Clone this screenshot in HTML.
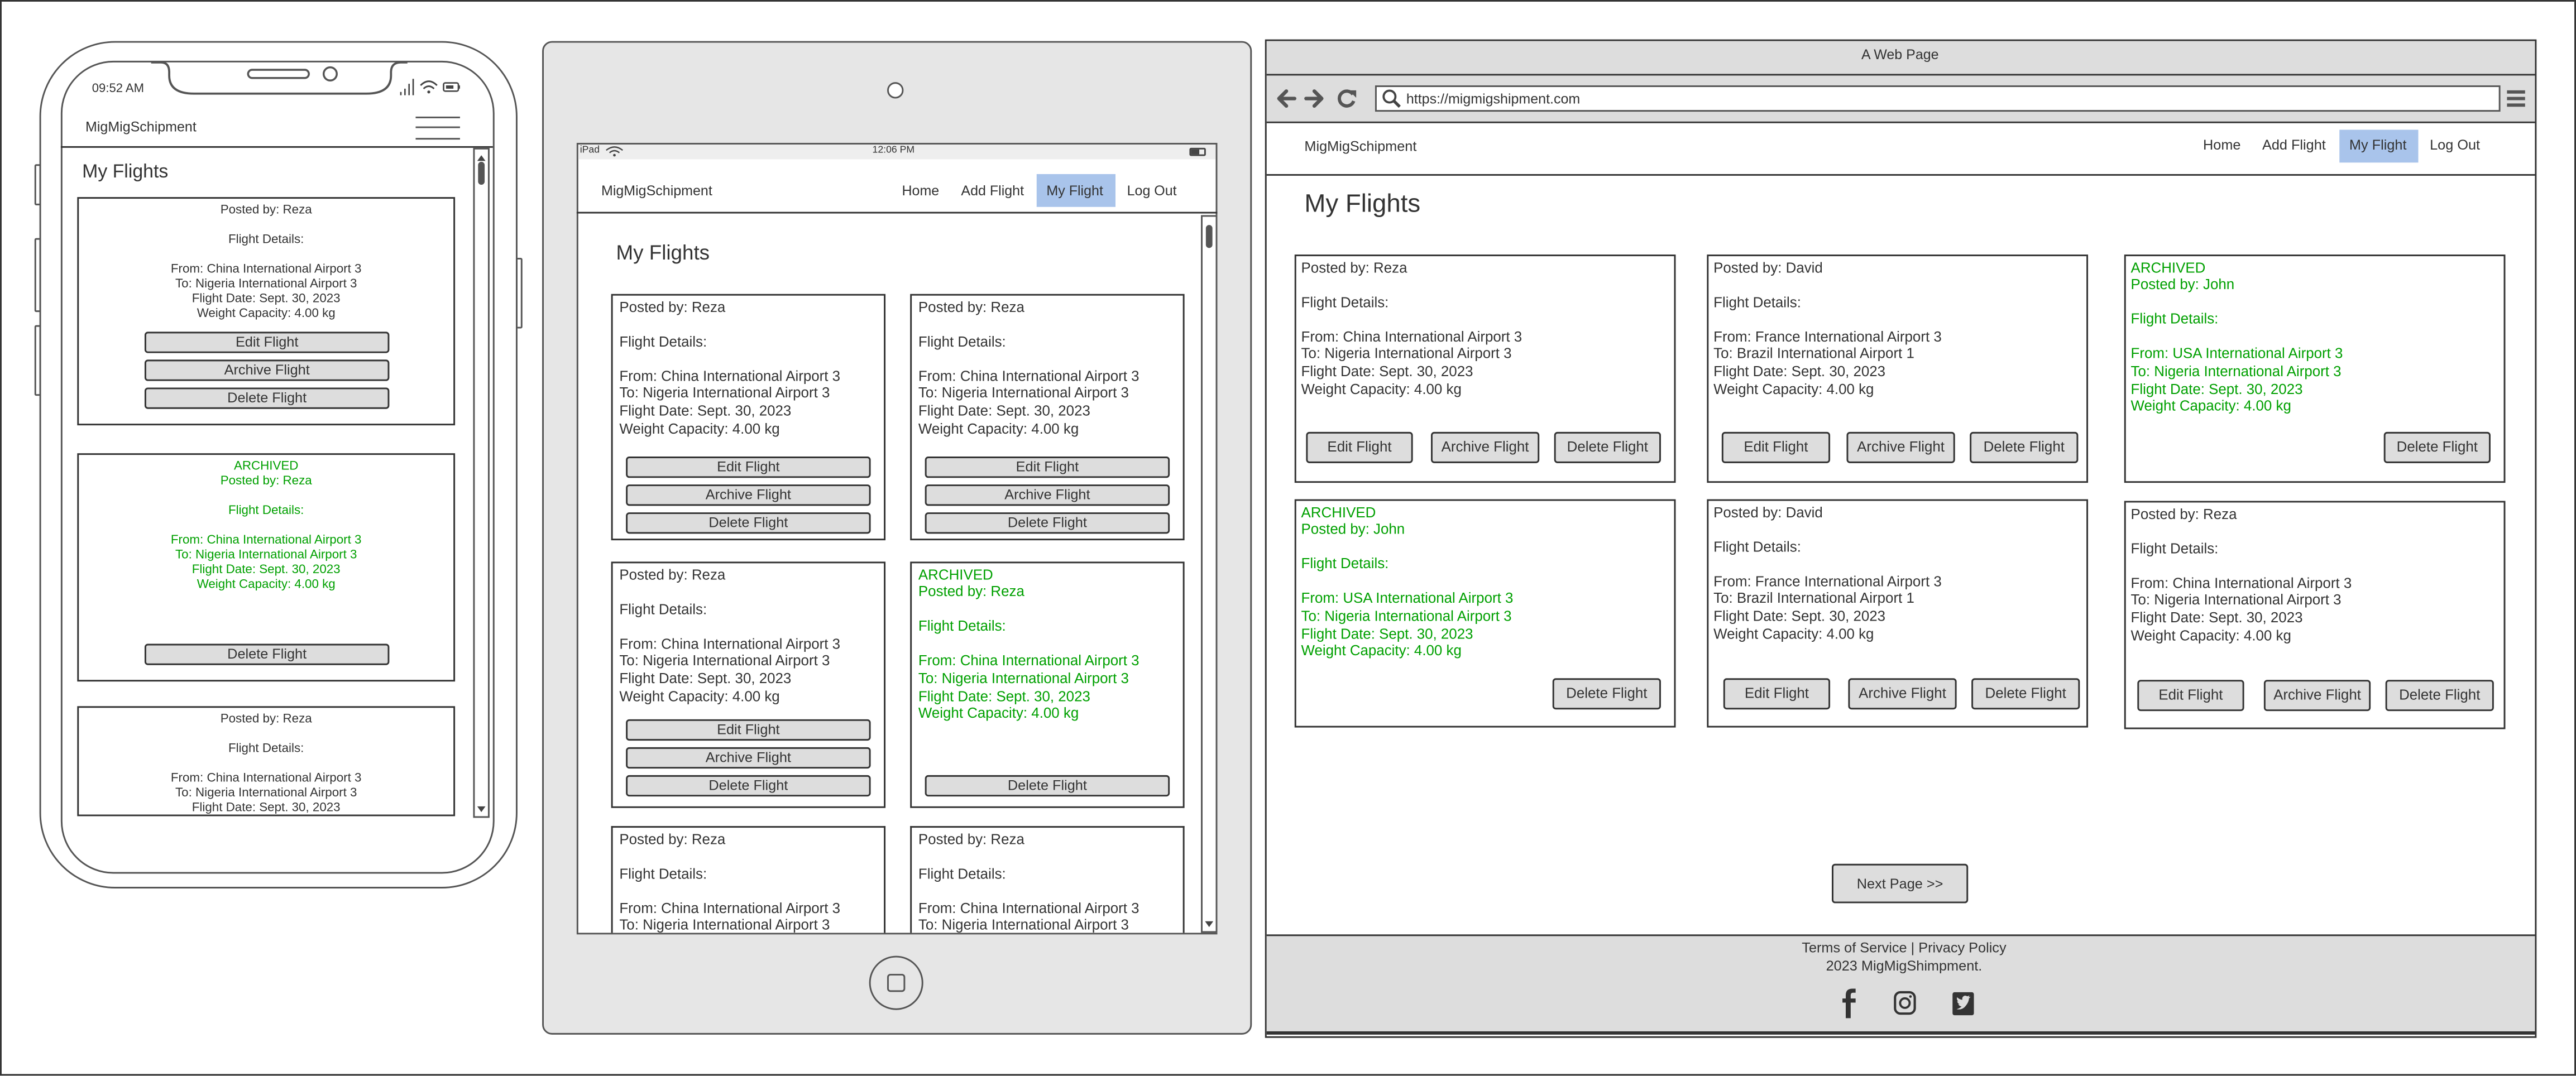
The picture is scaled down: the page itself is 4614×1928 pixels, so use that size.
<!DOCTYPE html>
<html><head><meta charset="utf-8">
<style>
html,body{margin:0;padding:0;width:4614px;height:1928px;overflow:hidden;background:#fff}
#s{position:absolute;left:0;top:0;width:1568px;height:655.2px;transform:scale(2.94260);transform-origin:0 0;font-family:"Liberation Sans",sans-serif;color:#333}
.a{position:absolute;box-sizing:border-box}
.t{position:absolute;white-space:nowrap;line-height:10px}
.card{position:absolute;box-sizing:border-box;border:1px solid #333;background:#fff;white-space:nowrap;overflow:hidden}
.b{position:absolute;box-sizing:border-box;border:1px solid #333;border-radius:2px;background:#ddd;text-align:center;white-space:nowrap}
.g{color:#00a000}
.bc{font-size:8.8px;line-height:10.6px;padding:1.5px 0 0 3px}
.tc{font-size:8.8px;line-height:10.6px;padding:1.5px 0 0 4px}
.pc{font-size:7.6px;line-height:9px;padding:2px 0 0 0;text-align:center}
.bb{font-size:8.8px;height:19px;line-height:17px}
.tb{font-size:8.6px;height:13px;line-height:11px}
.pb{font-size:8.6px;height:13px;line-height:11px}
</style></head><body><div id="s">
<div class="a" style="left:0;top:0;width:1568px;height:655px;border:1px solid #333"></div>

<!-- PHONE -->
<div class="a" style="left:21px;top:100px;width:4px;height:25px;border:1px solid #555;border-radius:1px"></div>
<div class="a" style="left:21px;top:145px;width:4px;height:45px;border:1px solid #555;border-radius:1px"></div>
<div class="a" style="left:21px;top:198px;width:4px;height:43px;border:1px solid #555;border-radius:1px"></div>
<div class="a" style="left:314px;top:157px;width:4px;height:43px;border:1px solid #555;border-radius:1px"></div>
<div class="a" style="left:24px;top:25px;width:291px;height:516px;border:1.5px solid #555;border-radius:46px;background:#fff"></div>
<div class="a" style="left:37px;top:37px;width:264px;height:495px;border:1.3px solid #555;border-radius:32px;background:#fff"></div>
<svg class="a" style="left:90px;top:37px" width="160" height="30" viewBox="0 0 160 30"><path d="M2 1 H8 Q13 1 13 7 V9 Q13 20 28 20 H133 Q148 20 148 9 V7 Q148 1 154 1 H158" fill="#fff" stroke="#555" stroke-width="1.3"/><rect x="61" y="5.5" width="37" height="5" rx="2.5" fill="none" stroke="#555" stroke-width="1.2"/><circle cx="111" cy="8" r="4" fill="none" stroke="#555" stroke-width="1.2"/></svg>
<div class="t" style="left:56px;top:49px;font-size:7.5px">09:52 AM</div>
<svg class="a" style="left:243px;top:47px" width="40" height="12" viewBox="0 0 40 12"><path d="M1 11V9M3.5 11V7M6 11V4M8.5 11V1" stroke="#444" stroke-width="0.9"/><path d="M13 5 Q18 0 23 5M14.8 7 Q18 4 21.2 7" fill="none" stroke="#444" stroke-width="1"/><circle cx="18" cy="9" r="0.9" fill="#444"/><rect x="27" y="3.5" width="9" height="5" rx="1" fill="none" stroke="#444" stroke-width="0.9"/><rect x="28.5" y="5" width="4.5" height="2" fill="#444"/><rect x="36" y="5" width="1" height="2" fill="#444"/></svg>
<div class="t" style="left:52px;top:72px;font-size:8.5px">MigMigSchipment</div>
<div class="a" style="left:253px;top:70.5px;width:27px;border-top:1px solid #555"></div>
<div class="a" style="left:253px;top:77px;width:27px;border-top:1px solid #555"></div>
<div class="a" style="left:253px;top:83.5px;width:27px;border-top:1px solid #555"></div>
<div class="a" style="left:37px;top:88.5px;width:263px;border-top:1px solid #333"></div>
<div class="a" style="left:288px;top:90px;width:10px;height:408px;border:1px solid #555;background:#fff"></div>
<svg class="a" style="left:288px;top:90px" width="10" height="408"><path d="M2.5 8 L5 4.5 L7.5 8Z" fill="#444"/><rect x="3" y="8.5" width="4" height="14" rx="2" fill="#555"/><path d="M2.5 401 L5 404.5 L7.5 401Z" fill="#444"/></svg>
<div class="t" style="left:50px;top:99px;font-size:11.5px;line-height:12px">My Flights</div>
<div class="card pc" style="left:47px;top:120px;width:230px;height:139px">Posted by: Reza<br><br>Flight Details:<br><br>From: China International Airport 3<br>To: Nigeria International Airport 3<br>Flight Date: Sept. 30, 2023<br>Weight Capacity: 4.00 kg</div>
<div class="b pb" style="left:88px;top:202px;width:149px">Edit Flight</div>
<div class="b pb" style="left:88px;top:219px;width:149px">Archive Flight</div>
<div class="b pb" style="left:88px;top:236px;width:149px">Delete Flight</div>
<div class="card pc g" style="left:47px;top:276px;width:230px;height:139px;color:#00a000">ARCHIVED<br>Posted by: Reza<br><br>Flight Details:<br><br>From: China International Airport 3<br>To: Nigeria International Airport 3<br>Flight Date: Sept. 30, 2023<br>Weight Capacity: 4.00 kg</div>
<div class="b pb" style="left:88px;top:392px;width:149px">Delete Flight</div>
<div class="card pc" style="left:47px;top:430px;width:230px;height:67px">Posted by: Reza<br><br>Flight Details:<br><br>From: China International Airport 3<br>To: Nigeria International Airport 3<br>Flight Date: Sept. 30, 2023</div>

<!-- TABLET -->
<div class="a" style="left:330px;top:25px;width:432px;height:605px;border:1.5px solid #555;border-radius:6px;background:#e6e6e6"></div>
<div class="a" style="left:540px;top:50px;width:10px;height:10px;border:1px solid #555;border-radius:50%;background:#fff"></div>
<div class="a" style="left:529px;top:582px;width:33px;height:33px;border:1.2px solid #555;border-radius:50%"></div>
<div class="a" style="left:540px;top:593px;width:11px;height:11px;border:1px solid #555;border-radius:2px"></div>
<div class="a" style="left:351px;top:87px;width:390px;height:482px;border:1px solid #555;background:#fff"></div>
<div class="a" style="left:352px;top:88px;width:388px;height:9px;background:#eee"></div>
<div class="t" style="left:353px;top:88px;font-size:6px;line-height:8px">iPad</div>
<svg class="a" style="left:368px;top:88px" width="12" height="8"><path d="M1 3.5 Q6 -0.5 11 3.5M3 5 Q6 2.5 9 5" fill="none" stroke="#444" stroke-width="0.8"/><circle cx="6" cy="6.5" r="0.8" fill="#444"/></svg>
<div class="t" style="left:531px;top:88px;font-size:6px;line-height:8px">12:06 PM</div>
<div class="a" style="left:724px;top:89.5px;width:10px;height:5px;border:0.8px solid #444;border-radius:1px"><div style="width:5px;height:3px;background:#444;margin:0.2px"></div></div>
<div class="t" style="left:366px;top:111px;font-size:8.5px">MigMigSchipment</div>
<div class="t" style="left:549px;top:111px;font-size:8.5px">Home</div>
<div class="t" style="left:585px;top:111px;font-size:8.5px">Add Flight</div>
<div class="a" style="left:631px;top:106px;width:48px;height:20px;background:#a9c4eb"></div>
<div class="t" style="left:637px;top:111px;font-size:8.5px">My Flight</div>
<div class="t" style="left:686px;top:111px;font-size:8.5px">Log Out</div>
<div class="a" style="left:351px;top:129px;width:390px;border-top:1px solid #333"></div>
<div class="a" style="left:731px;top:131px;width:10px;height:437px;border:1px solid #555;background:#fff"></div>
<svg class="a" style="left:731px;top:131px" width="10" height="437"><rect x="3" y="6" width="4" height="14" rx="2" fill="#555"/><path d="M2.5 430 L5 433.5 L7.5 430Z" fill="#444"/></svg>
<div class="t" style="left:375px;top:147px;font-size:12.5px;line-height:14px">My Flights</div>
<div class="card tc" style="left:372px;top:179px;width:167px;height:150px">Posted by: Reza<br><br>Flight Details:<br><br>From: China International Airport 3<br>To: Nigeria International Airport 3<br>Flight Date: Sept. 30, 2023<br>Weight Capacity: 4.00 kg</div>
<div class="b tb" style="left:381px;top:278px;width:149px">Edit Flight</div>
<div class="b tb" style="left:381px;top:295px;width:149px">Archive Flight</div>
<div class="b tb" style="left:381px;top:312px;width:149px">Delete Flight</div>
<div class="card tc" style="left:554px;top:179px;width:167px;height:150px">Posted by: Reza<br><br>Flight Details:<br><br>From: China International Airport 3<br>To: Nigeria International Airport 3<br>Flight Date: Sept. 30, 2023<br>Weight Capacity: 4.00 kg</div>
<div class="b tb" style="left:563px;top:278px;width:149px">Edit Flight</div>
<div class="b tb" style="left:563px;top:295px;width:149px">Archive Flight</div>
<div class="b tb" style="left:563px;top:312px;width:149px">Delete Flight</div>
<div class="card tc" style="left:372px;top:342px;width:167px;height:150px">Posted by: Reza<br><br>Flight Details:<br><br>From: China International Airport 3<br>To: Nigeria International Airport 3<br>Flight Date: Sept. 30, 2023<br>Weight Capacity: 4.00 kg</div>
<div class="b tb" style="left:381px;top:438px;width:149px">Edit Flight</div>
<div class="b tb" style="left:381px;top:455px;width:149px">Archive Flight</div>
<div class="b tb" style="left:381px;top:472px;width:149px">Delete Flight</div>
<div class="card tc" style="left:554px;top:342px;width:167px;height:150px;color:#00a000">ARCHIVED<br>Posted by: Reza<br><br>Flight Details:<br><br>From: China International Airport 3<br>To: Nigeria International Airport 3<br>Flight Date: Sept. 30, 2023<br>Weight Capacity: 4.00 kg</div>
<div class="b tb" style="left:563px;top:472px;width:149px">Delete Flight</div>
<div class="card tc" style="left:372px;top:503px;width:167px;height:65px;border-bottom:none">Posted by: Reza<br><br>Flight Details:<br><br>From: China International Airport 3<br>To: Nigeria International Airport 3</div>
<div class="card tc" style="left:554px;top:503px;width:167px;height:65px;border-bottom:none">Posted by: Reza<br><br>Flight Details:<br><br>From: China International Airport 3<br>To: Nigeria International Airport 3</div>

<!-- BROWSER -->
<div class="a" style="left:770px;top:24px;width:774px;height:608px;border:1.5px solid #333;background:#fff"></div>
<div class="a" style="left:771px;top:25px;width:772px;height:49px;background:#ddd"></div>
<div class="t" style="left:1133px;top:28px;font-size:8.5px">A Web Page</div>
<div class="a" style="left:771px;top:45px;width:772px;border-top:1px solid #333"></div>
<div class="a" style="left:771px;top:74px;width:772px;border-top:1px solid #333"></div>
<svg class="a" style="left:776px;top:52px" width="55" height="16" viewBox="0 0 55 16"><path d="M12 8H3M7 3.5L2.5 8L7 12.5" fill="none" stroke="#555" stroke-width="2.2" stroke-linecap="round" stroke-linejoin="round"/><path d="M19 8H28M24 3.5L28.5 8L24 12.5" fill="none" stroke="#555" stroke-width="2.2" stroke-linecap="round" stroke-linejoin="round"/><path d="M47.5 5.5A4.5 4.5 0 1 0 48 9.5" fill="none" stroke="#555" stroke-width="2"/><path d="M45 3L49.5 3L49.5 7.5Z" fill="#555"/></svg>
<div class="a" style="left:837px;top:52px;width:685px;height:16px;border:1px solid #555;background:#fff"></div>
<svg class="a" style="left:841px;top:54px" width="12" height="12"><circle cx="4.8" cy="4.8" r="3.6" fill="none" stroke="#444" stroke-width="1.3"/><path d="M7.5 7.5L11 11" stroke="#444" stroke-width="1.8"/></svg>
<div class="t" style="left:856px;top:55px;font-size:8.5px">https://migmigshipment.com</div>
<div class="a" style="left:1526px;top:55px;width:11px;height:2px;background:#555"></div>
<div class="a" style="left:1526px;top:59px;width:11px;height:2px;background:#555"></div>
<div class="a" style="left:1526px;top:63px;width:11px;height:2px;background:#555"></div>
<div class="t" style="left:794px;top:84px;font-size:8.6px">MigMigSchipment</div>
<div class="t" style="left:1341px;top:83px;font-size:8.6px">Home</div>
<div class="t" style="left:1377px;top:83px;font-size:8.6px">Add Flight</div>
<div class="a" style="left:1424px;top:79px;width:48px;height:20px;background:#a9c4eb"></div>
<div class="t" style="left:1430px;top:83px;font-size:8.6px">My Flight</div>
<div class="t" style="left:1479px;top:83px;font-size:8.6px">Log Out</div>
<div class="a" style="left:771px;top:105.5px;width:772px;border-top:1px solid #333"></div>
<div class="t" style="left:794px;top:116px;font-size:15.5px;line-height:17px">My Flights</div>

<div class="card bc" style="left:788px;top:155px;width:232px;height:139px">Posted by: Reza<br><br>Flight Details:<br><br>From: China International Airport 3<br>To: Nigeria International Airport 3<br>Flight Date: Sept. 30, 2023<br>Weight Capacity: 4.00 kg</div>
<div class="b bb" style="left:795px;top:263px;width:65px">Edit Flight</div>
<div class="b bb" style="left:871px;top:263px;width:66px">Archive Flight</div>
<div class="b bb" style="left:946px;top:263px;width:65px">Delete Flight</div>

<div class="card bc" style="left:1039px;top:155px;width:232px;height:139px">Posted by: David<br><br>Flight Details:<br><br>From: France International Airport 3<br>To: Brazil International Airport 1<br>Flight Date: Sept. 30, 2023<br>Weight Capacity: 4.00 kg</div>
<div class="b bb" style="left:1048px;top:263px;width:66px">Edit Flight</div>
<div class="b bb" style="left:1124px;top:263px;width:66px">Archive Flight</div>
<div class="b bb" style="left:1199px;top:263px;width:66px">Delete Flight</div>

<div class="card bc" style="left:1293px;top:155px;width:232px;height:139px;color:#00a000">ARCHIVED<br>Posted by: John<br><br>Flight Details:<br><br>From: USA International Airport 3<br>To: Nigeria International Airport 3<br>Flight Date: Sept. 30, 2023<br>Weight Capacity: 4.00 kg</div>
<div class="b bb" style="left:1451px;top:263px;width:65px">Delete Flight</div>

<div class="card bc" style="left:788px;top:304px;width:232px;height:139px;color:#00a000">ARCHIVED<br>Posted by: John<br><br>Flight Details:<br><br>From: USA International Airport 3<br>To: Nigeria International Airport 3<br>Flight Date: Sept. 30, 2023<br>Weight Capacity: 4.00 kg</div>
<div class="b bb" style="left:945px;top:413px;width:66px">Delete Flight</div>

<div class="card bc" style="left:1039px;top:304px;width:232px;height:139px">Posted by: David<br><br>Flight Details:<br><br>From: France International Airport 3<br>To: Brazil International Airport 1<br>Flight Date: Sept. 30, 2023<br>Weight Capacity: 4.00 kg</div>
<div class="b bb" style="left:1049px;top:413px;width:65px">Edit Flight</div>
<div class="b bb" style="left:1125px;top:413px;width:66px">Archive Flight</div>
<div class="b bb" style="left:1200px;top:413px;width:66px">Delete Flight</div>

<div class="card bc" style="left:1293px;top:305px;width:232px;height:139px">Posted by: Reza<br><br>Flight Details:<br><br>From: China International Airport 3<br>To: Nigeria International Airport 3<br>Flight Date: Sept. 30, 2023<br>Weight Capacity: 4.00 kg</div>
<div class="b bb" style="left:1301px;top:414px;width:65px">Edit Flight</div>
<div class="b bb" style="left:1378px;top:414px;width:65px">Archive Flight</div>
<div class="b bb" style="left:1452px;top:414px;width:66px">Delete Flight</div>

<div class="b" style="left:1115px;top:526px;width:83px;height:24px;line-height:22px;font-size:8.6px">Next Page &gt;&gt;</div>

<div class="a" style="left:771px;top:569px;width:772px;height:61px;background:#ddd;border-top:1.3px solid #333;border-bottom:2px solid #333"></div>
<div class="t" style="left:1059px;top:572px;width:200px;text-align:center;font-size:8.6px">Terms of Service | Privacy Policy</div>
<div class="t" style="left:1059px;top:583px;width:200px;text-align:center;font-size:8.6px">2023 MigMigShimpment.</div>
<svg class="a" style="left:1115px;top:601px" width="95" height="20" viewBox="0 0 95 20"><path d="M11.5 19V9.5H14.5V7H11.5V5Q11.5 3.5 13 3.5H14.5V1H12.5Q8.5 1 8.5 5V7H6.5V9.5H8.5V19Z" fill="#333"/><rect x="38.5" y="3.2" width="12" height="13" rx="3.3" fill="none" stroke="#333" stroke-width="1.4"/><circle cx="44.5" cy="9.8" r="2.9" fill="none" stroke="#333" stroke-width="1.3"/><circle cx="47.9" cy="5.8" r="0.8" fill="#333"/><rect x="73.5" y="3.2" width="13" height="14" rx="1.2" fill="#333"/><path d="M76 13.5Q79.5 14.2 81.5 11.5Q83.5 9 83.5 7L84.5 6L83.3 6.2L83.8 5.2L82.5 5.7Q81 4.7 79.8 6Q79.2 6.8 79.5 7.8Q77.5 7.6 76.3 6.2Q75.8 7.8 77 8.8L76.3 8.7Q76.6 10 77.8 10.4L77 10.5Q77.6 11.7 79 11.9Q77.8 13 76 13.5Z" fill="#ddd"/></svg>
</div></body></html>
